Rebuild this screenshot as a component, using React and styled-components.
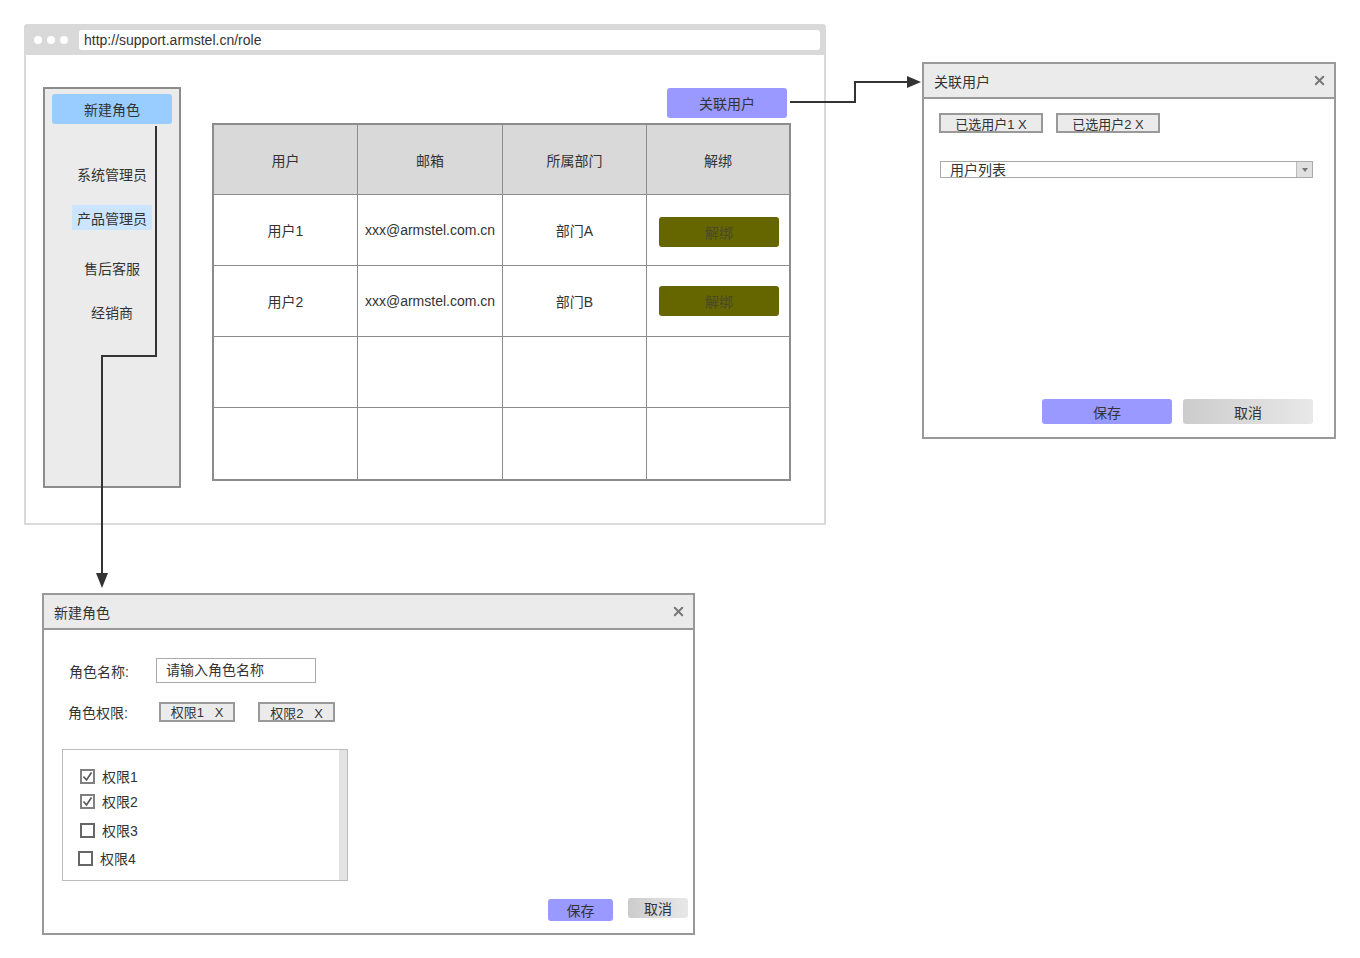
import React from "react";
import styled, { createGlobalStyle } from "styled-components";
import { X } from "lucide-react";

const Global = createGlobalStyle`
  html, body { margin: 0; padding: 0; background: #fff; }
  body { font-family: "Liberation Sans", "Noto Sans CJK SC", sans-serif; color: #333; }
  * { box-sizing: border-box; }
`;

const Canvas = styled.div`
  position: relative;
  width: 1360px;
  height: 958px;
  overflow: hidden;
`;

/* ---------- browser window ---------- */
const BrowserWindow = styled.div`
  position: absolute;
  left: 24px;
  top: 24px;
  width: 802px;
  height: 501px;
  border: 2px solid #dadada;
  border-top: none;
  border-radius: 4px 4px 0 0;
  display: flex;
  flex-direction: column;
  background: #fff;
`;

const TitleBar = styled.div`
  height: 31px;
  background: #d9d9d9;
  display: flex;
  align-items: center;
  padding: 1px 6px 0 10px;
  border-radius: 4px 4px 0 0;
  margin: 0 -2px;
`;

const Dot = styled.span`
  width: 8px;
  height: 8px;
  border-radius: 50%;
  background: #fff;
  margin-right: 5px;
  flex: none;
`;

const Address = styled.div`
  flex: 1;
  height: 20px;
  margin-left: 6px;
  background: #fff;
  border-radius: 3px;
  font-size: 14px;
  line-height: 21px;
  padding-left: 5px;
  color: #333;
`;

const BrowserBody = styled.div`
  flex: 1;
  display: flex;
  padding: 32px 0 0 17px;
  gap: 31px;
`;

const Sidebar = styled.div`
  width: 138px;
  height: 401px;
  background: #ebebeb;
  border: 2px solid #8c8c8c;
  padding: 5px 7px;
  display: flex;
  flex-direction: column;
  align-items: center;
`;

const PrimaryButton = styled.div`
  width: ${(p) => p.$w || 120}px;
  height: ${(p) => p.$h || 30}px;
  background: ${(p) => p.$bg || "#99ccff"};
  border-radius: 3px;
  display: flex;
  align-items: center;
  justify-content: center;
  font-size: 14px;
  color: ${(p) => p.$color || "#333"};
  flex: none;
`;

const MenuList = styled.div`
  margin-top: 37px;
  display: flex;
  flex-direction: column;
  align-items: center;
`;

const MenuItem = styled.div`
  height: 25px;
  padding: 0 5px;
  margin-top: ${(p) => p.$mt || 0}px;
  display: flex;
  align-items: center;
  font-size: 14px;
  color: #333;
  background: ${(p) => (p.$active ? "#cce5ff" : "transparent")};
`;

const Main = styled.div`
  display: flex;
  flex-direction: column;
  align-items: flex-end;
  width: 579px;
  padding-top: 1px;
`;

const Table = styled.div`
  margin-top: 5px;
  width: 579px;
  border: 2px solid #8c8c8c;
  display: grid;
  grid-template-columns: 144px 145px 144px 1fr;
  grid-template-rows: 70px;
  grid-auto-rows: 71px;
`;

const Cell = styled.div`
  display: flex;
  align-items: center;
  justify-content: center;
  font-size: 14px;
  color: #333;
  background: ${(p) => (p.$head ? "#d9d9d9" : "#fff")};
  border-right: ${(p) => (p.$lastCol ? "none" : "1px solid #8c8c8c")};
  border-bottom: ${(p) => (p.$lastRow ? "none" : "1px solid #8c8c8c")};
`;

/* ---------- dialogs ---------- */
const Dialog = styled.div`
  position: absolute;
  left: ${(p) => p.$x}px;
  top: ${(p) => p.$y}px;
  width: ${(p) => p.$w}px;
  height: ${(p) => p.$h}px;
  border: 2px solid #999;
  background: #fff;
  display: flex;
  flex-direction: column;
`;

const DialogHeader = styled.div`
  height: 35px;
  flex: none;
  background: #ebebeb;
  border-bottom: 2px solid #999;
  display: flex;
  align-items: center;
  justify-content: space-between;
  padding: 0 7px 0 10px;
  font-size: 14px;
  color: #333;
`;

const DialogBody = styled.div`
  flex: 1;
  display: flex;
  flex-direction: column;
  padding: ${(p) => p.$pad};
`;

const TagRow = styled.div`
  display: flex;
  gap: ${(p) => p.$gap || 13}px;
  align-items: center;
`;

const Tag = styled.div`
  width: ${(p) => p.$w}px;
  height: 20px;
  border: 2px solid #999;
  background: #ebebeb;
  display: flex;
  align-items: center;
  justify-content: center;
  font-size: 13px;
  color: #333;
  white-space: pre;
  margin-top: ${(p) => p.$dy || 0}px;
`;

const Select = styled.div`
  margin-top: 28px;
  margin-left: 1px;
  width: 373px;
  height: 17px;
  border: 1px solid #aaa;
  display: flex;
  overflow: hidden;
`;

const SelectText = styled.div`
  flex: 1;
  font-size: 14px;
  line-height: 16px;
  padding-left: 9px;
  color: #333;
`;

const SelectArrow = styled.div`
  width: 16px;
  background: #e0e0e0;
  border-left: 1px solid #bbb;
  display: flex;
  align-items: center;
  justify-content: center;
  &::after {
    content: "";
    border-left: 3px solid transparent;
    border-right: 3px solid transparent;
    border-top: 4px solid #777;
  }
`;

const Footer = styled.div`
  margin-top: auto;
  display: flex;
  justify-content: flex-end;
  align-items: ${(p) => p.$align || "center"};
  gap: ${(p) => p.$gap}px;
`;

const CancelButton = styled.div`
  width: ${(p) => p.$w}px;
  height: ${(p) => p.$h}px;
  border-radius: 3px;
  background: linear-gradient(to right, #cccccc, #e8e8e8);
  display: flex;
  align-items: center;
  justify-content: center;
  font-size: 14px;
  color: #333;
`;

const FormRow = styled.div`
  display: flex;
  align-items: center;
  margin-top: ${(p) => p.$mt}px;
`;

const Label = styled.div`
  width: ${(p) => p.$w || 87}px;
  padding-left: ${(p) => p.$pl || 0}px;
  font-size: 14px;
  color: #333;
`;

const Input = styled.div`
  width: 160px;
  height: 25px;
  border: 1px solid #aaa;
  font-size: 14px;
  line-height: 23px;
  padding-left: 9px;
  color: #333;
`;

const CheckList = styled.div`
  margin-top: 27px;
  width: 286px;
  height: 132px;
  border: 1px solid #bbb;
  position: relative;
  display: flex;
  flex-direction: column;
  gap: 12px;
  padding: 19px 0 0 17px;
  &::after {
    content: "";
    position: absolute;
    top: 0;
    right: 0;
    bottom: 0;
    width: 8px;
    background: #e3e3e3;
  }
`;

const CheckRow = styled.div`
  display: flex;
  align-items: center;
  gap: 7px;
  height: 14px;
  font-size: 14px;
  color: #333;
  margin-left: ${(p) => p.$shift || 0}px;
  margin-top: ${(p) => p.$mt || 0}px;
`;

const Box = styled.span`
  width: 15px;
  height: 15px;
  border: 2px solid ${(p) => (p.$checked ? "#808080" : "#666")};
  background: #fff;
  display: flex;
  align-items: center;
  justify-content: center;
  flex: none;
`;

const Overlay = styled.svg`
  position: absolute;
  left: 0;
  top: 0;
  pointer-events: none;
`;

const CloseIcon = () => <X size={15} strokeWidth={3.2} color="#777" />;

const Check = () => (
  <svg width="11" height="11" viewBox="0 0 11 11">
    <path d="M1.5 5.5 L4.5 9 L9.5 1.5" fill="none" stroke="#555" strokeWidth="1.6" />
  </svg>
);

const users = [
  ["用户1", "xxx@armstel.com.cn", "部门A", true],
  ["用户2", "xxx@armstel.com.cn", "部门B", true],
  ["", "", "", false],
  ["", "", "", false],
];

export default function App() {
  const heads = ["用户", "邮箱", "所属部门", "解绑"];
  return (
    <Canvas>
      <Global />
      <BrowserWindow>
        <TitleBar>
          <Dot />
          <Dot />
          <Dot />
          <Address>http://support.armstel.cn/role</Address>
        </TitleBar>
        <BrowserBody>
          <Sidebar>
            <PrimaryButton>新建角色</PrimaryButton>
            <MenuList>
              <MenuItem>系统管理员</MenuItem>
              <MenuItem $active $mt={19}>产品管理员</MenuItem>
              <MenuItem $mt={25}>售后客服</MenuItem>
              <MenuItem $mt={19}>经销商</MenuItem>
            </MenuList>
          </Sidebar>
          <Main>
            <PrimaryButton $bg="#9999ff" style={{ marginRight: 4 }}>
              关联用户
            </PrimaryButton>
            <Table>
              {heads.map((h, i) => (
                <Cell key={h} $head $lastCol={i === 3}>
                  {h}
                </Cell>
              ))}
              {users.map((u, r) =>
                [0, 1, 2, 3].map((c) => (
                  <Cell key={`${r}-${c}`} $lastCol={c === 3} $lastRow={r === users.length - 1}>
                    {c < 3 ? (
                      u[c]
                    ) : u[3] ? (
                      <PrimaryButton
                        $bg="#666600"
                        $color="#4a4a26"
                        style={{ marginLeft: 2, marginTop: r === 0 ? 3 : 0 }}
                      >
                        解绑
                      </PrimaryButton>
                    ) : null}
                  </Cell>
                ))
              )}
            </Table>
          </Main>
        </BrowserBody>
      </BrowserWindow>

      <Dialog $x={922} $y={62} $w={414} $h={377}>
        <DialogHeader>
          <span>关联用户</span>
          <CloseIcon />
        </DialogHeader>
        <DialogBody $pad="14px 21px 13px 15px">
          <TagRow>
            <Tag $w={104}>已选用户1 X</Tag>
            <Tag $w={104}>已选用户2 X</Tag>
          </TagRow>
          <Select>
            <SelectText>用户列表</SelectText>
            <SelectArrow />
          </Select>
          <Footer $gap={11}>
            <PrimaryButton $bg="#9999ff" $w={130} $h={25}>
              保存
            </PrimaryButton>
            <CancelButton $w={130} $h={25}>
              取消
            </CancelButton>
          </Footer>
        </DialogBody>
      </Dialog>

      <Dialog $x={42} $y={593} $w={653} $h={342}>
        <DialogHeader>
          <span>新建角色</span>
          <CloseIcon />
        </DialogHeader>
        <DialogBody $pad="28px 5px 12px 18px">
          <FormRow $mt={0}>
            <Label $w={94} $pl={7}>角色名称:</Label>
            <Input>请输入角色名称</Input>
          </FormRow>
          <FormRow $mt={18}>
            <Label $w={97} $pl={6}>角色权限:</Label>
            <TagRow $gap={23}>
              <Tag $w={76}>{"权限1   X"}</Tag>
              <Tag $w={77} $dy={1}>{"权限2   X"}</Tag>
            </TagRow>
          </FormRow>
          <CheckList>
            <CheckRow>
              <Box $checked>
                <Check />
              </Box>
              权限1
            </CheckRow>
            <CheckRow $mt={-1}>
              <Box $checked>
                <Check />
              </Box>
              权限2
            </CheckRow>
            <CheckRow $mt={3}>
              <Box />
              权限3
            </CheckRow>
            <CheckRow $shift={-2} $mt={2}>
              <Box />
              权限4
            </CheckRow>
          </CheckList>
          <Footer $gap={15} $align="flex-start">
            <PrimaryButton $bg="#9999ff" $w={65} $h={22} style={{ marginTop: 1 }}>
              保存
            </PrimaryButton>
            <CancelButton $w={60} $h={20}>
              取消
            </CancelButton>
          </Footer>
        </DialogBody>
      </Dialog>

      <Overlay width="1360" height="958" viewBox="0 0 1360 958">
        <path d="M790 102 H855 V82 H910" fill="none" stroke="#333" strokeWidth="2" />
        <polygon points="907,76 921,82 907,88" fill="#333" />
        <path d="M156 126 V356 H102 V576" fill="none" stroke="#333" strokeWidth="2" />
        <polygon points="96,573 102,588 108,573" fill="#333" />
      </Overlay>
    </Canvas>
  );
}
